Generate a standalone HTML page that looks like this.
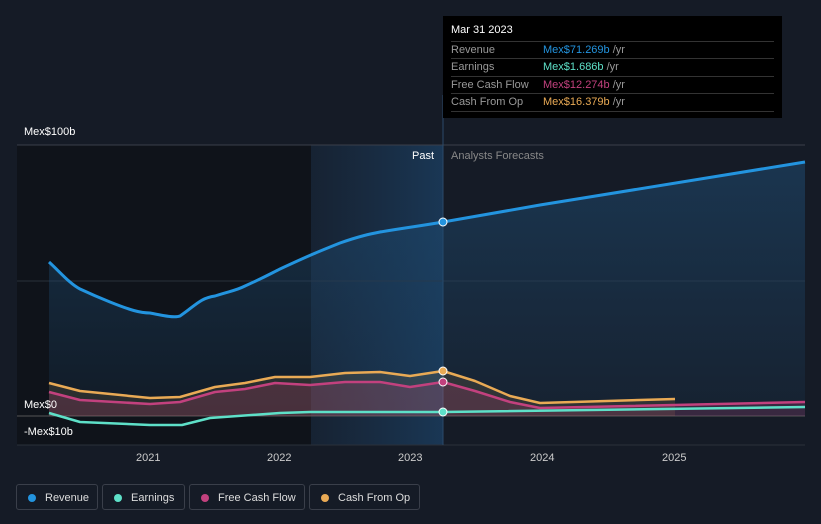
<!DOCTYPE html><html><head><style>
body{margin:0;width:821px;height:524px;background:#151b26;font-family:"Liberation Sans",sans-serif;overflow:hidden;position:relative}
.t{position:absolute;font-size:11px;color:#fff}
.tip{position:absolute;left:443px;top:16px;width:339px;height:102px;background:#000;}
.tip .r{position:absolute;left:8px;width:323px;border-top:1px solid #333;height:17px;font-size:11px;color:#999;line-height:17px}
.tip .r span{position:absolute;left:92px}
.lg{position:absolute;top:484px;height:26px;border:1px solid #3a3f4a;border-radius:3px;font-size:11px;color:#ddd;line-height:26px;box-sizing:border-box}
.lg i{position:absolute;left:11px;top:9px;width:8px;height:8px;border-radius:50%}
</style></head><body>
<svg width="821" height="524" style="position:absolute;left:0;top:0">
<defs><linearGradient id="g" x1="0" y1="0" x2="0" y2="1"><stop offset="0" stop-color="#1e4a70" stop-opacity=".8"/><stop offset="1" stop-color="#1e4a70" stop-opacity=".2"/></linearGradient>
<linearGradient id="h" x1="0" y1="0" x2="1" y2="0"><stop offset="0" stop-color="#1a3450" stop-opacity=".3"/><stop offset="1" stop-color="#1a3a5a" stop-opacity=".9"/></linearGradient></defs>
<rect x="17" y="145" width="294" height="300" fill="#0f131a"/>
<rect x="311" y="145" width="132" height="300" fill="url(#h)"/>
<line x1="17" y1="145" x2="805" y2="145" stroke="#3a3f4a"/>
<line x1="17" y1="281" x2="805" y2="281" stroke="#2a303a"/>
<line x1="17" y1="416" x2="805" y2="416" stroke="#555"/>
<line x1="17" y1="445" x2="805" y2="445" stroke="#2a303a"/>
<line x1="443" y1="95" x2="443" y2="445" stroke="#2a4a6a"/>
<path d="M49,262 C60,272 70,284 80,289 C95,296 100,298 110,302 C130,310 140,313 150,313 C165,316 175,318 180,316 C195,306 200,298 215,296 C230,291 235,291 245,286 C265,277 270,274 280,269 C310,255 320,251 340,243 C360,236 370,234 380,232 C410,227 420,226 443,222 L540,205 L805,162 L805,416 L49,416Z" fill="url(#g)" opacity=".7"/>
<path d="M49,262 C60,272 70,284 80,289 C95,296 100,298 110,302 C130,310 140,313 150,313 C165,316 175,318 180,316 C195,306 200,298 215,296 C230,291 235,291 245,286 C265,277 270,274 280,269 C310,255 320,251 340,243 C360,236 370,234 380,232 C410,227 420,226 443,222 L540,205 L805,162" fill="none" stroke="#2394df" stroke-width="3"/>
<path d="M49,383 L80,391 L150,398 L180,397 L215,387 L245,383 L275,377 L310,377 L345,373 L380,372 L410,376 L443,371 L475,381 L510,396 L540,403 L675,399 L675,416 L49,416Z" fill="#e9aa55" opacity=".12"/>
<path d="M49,392 L80,400 L150,404 L180,402 L215,392 L245,389 L275,383 L310,385 L345,382 L380,382 L410,387 L443,382 L475,391 L510,402 L540,408 L805,402 L805,416 L49,416Z" fill="#c2417e" opacity=".2"/>
<path d="M49,383 L80,391 L150,398 L180,397 L215,387 L245,383 L275,377 L310,377 L345,373 L380,372 L410,376 L443,371 L475,381 L510,396 L540,403 L675,399" fill="none" stroke="#e9aa55" stroke-width="2.5" stroke-linejoin="round"/>
<path d="M49,392 L80,400 L150,404 L180,402 L215,392 L245,389 L275,383 L310,385 L345,382 L380,382 L410,387 L443,382 L475,391 L510,402 L540,408 L805,402" fill="none" stroke="#c2417e" stroke-width="2.5" stroke-linejoin="round"/>
<path d="M49,413 L80,422 L150,425 L182,425 L210,418 L280,413 L310,412 L443,412 L805,407" fill="none" stroke="#5ee0c8" stroke-width="2.5" stroke-linejoin="round"/>
<circle cx="443" cy="222" r="4" fill="#2394df" stroke="#fff"/>
<circle cx="443" cy="371" r="4" fill="#e9aa55" stroke="#fff"/>
<circle cx="443" cy="382" r="4" fill="#c2417e" stroke="#fff"/>
<circle cx="443" cy="412" r="4" fill="#5ee0c8" stroke="#fff"/>
</svg>
<div class="t" style="left:24px;top:126px">Mex$100b</div>
<div class="t" style="left:24px;top:399px">Mex$0</div>
<div class="t" style="left:24px;top:426px">-Mex$10b</div>
<div class="t" style="left:412px;top:150px">Past</div>
<div class="t" style="left:451px;top:150px;color:#888">Analysts Forecasts</div>
<div class="t" style="left:136px;top:452px;color:#ccc">2021</div>
<div class="t" style="left:267px;top:452px;color:#ccc">2022</div>
<div class="t" style="left:398px;top:452px;color:#ccc">2023</div>
<div class="t" style="left:530px;top:452px;color:#ccc">2024</div>
<div class="t" style="left:662px;top:452px;color:#ccc">2025</div>
<div class="tip">
<div style="position:absolute;left:8px;top:8px;color:#fff;font-size:11px">Mar 31 2023</div>
<div class="r" style="top:25px">Revenue<span><b style="font-weight:normal;color:#2394df">Mex$71.269b</b> /yr</span></div>
<div class="r" style="top:42px">Earnings<span><b style="font-weight:normal;color:#5ee0c8">Mex$1.686b</b> /yr</span></div>
<div class="r" style="top:60px">Free Cash Flow<span><b style="font-weight:normal;color:#c2417e">Mex$12.274b</b> /yr</span></div>
<div class="r" style="top:77px;border-bottom:1px solid #333">Cash From Op<span><b style="font-weight:normal;color:#e9aa55">Mex$16.379b</b> /yr</span></div>
</div>
<div class="lg" style="left:16px;width:82px"><i style="background:#2394df"></i><span style="position:absolute;left:28px">Revenue</span></div>
<div class="lg" style="left:102px;width:83px"><i style="background:#5ee0c8"></i><span style="position:absolute;left:28px">Earnings</span></div>
<div class="lg" style="left:189px;width:116px"><i style="background:#c2417e"></i><span style="position:absolute;left:28px">Free Cash Flow</span></div>
<div class="lg" style="left:309px;width:111px"><i style="background:#e9aa55"></i><span style="position:absolute;left:28px">Cash From Op</span></div>
</body></html>
